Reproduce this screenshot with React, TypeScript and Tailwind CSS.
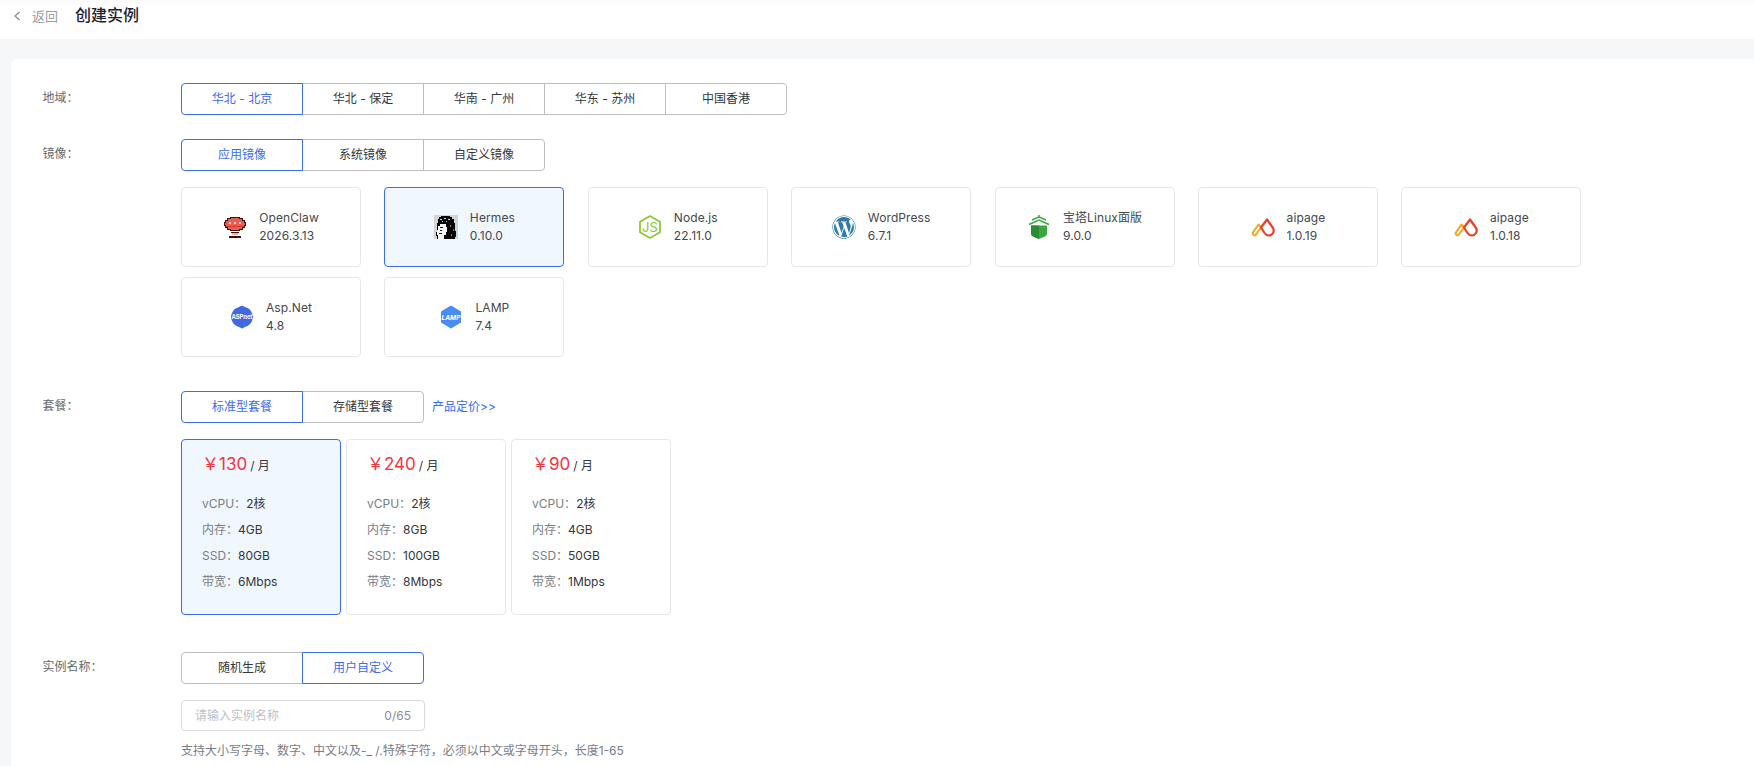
import React from "react";
import { FaWordpress } from "react-icons/fa";

const Seg = ({ items, active }: { items: string[]; active: number }) => (
  <div className="flex">
    {items.map((t, i) => (
      <div
        key={t}
        className={[
          "h-8 w-[122px] flex items-center justify-center border text-xs shrink-0",
          i > 0 ? "-ml-px" : "",
          i === 0 ? "rounded-l" : "",
          i === items.length - 1 ? "rounded-r" : "",
          i === active ? "border-[#3b6cf0] text-[#3b6cf0] relative z-10" : "border-[#bcbec4] text-[#33363d]",
        ].join(" ")}
      >
        {t}
      </div>
    ))}
  </div>
);

const Claw = () => (
  <svg viewBox="0 0 24 24" className="w-6 h-6" shapeRendering="crispEdges">
    <path d="M7 2h10v1h3v2h2v2h1v4h-1v2h-2v2h-3v1H7v-1H4v-2H2v-2H1V7h1V5h2V3h3z" fill="#3d1210" />
    <path d="M8 3h8v1h3v2h2v2h1v2h-1v2h-2v2h-3v1H8v-1H5v-2H3v-2H2V8h1V6h2V4h3z" fill="#ee5b50" />
    <path d="M6 7h2v2H6zM11 7h2v2h-2zM16 7h2v2h-2z" fill="#ffd6d0" />
    <path d="M3 11h18v1H3z" fill="#c93a30" />
    <path d="M8 17h8v1H8z" fill="#3d1210" />
    <path d="M9 18h6v2H9z" fill="#f3b0a8" />
    <path d="M6 21h12v2H6z" fill="#3d1210" />
  </svg>
);

const Hermes = () => (
  <svg viewBox="0 0 24 24" className="w-6 h-6" shapeRendering="crispEdges">
    <rect width="24" height="24" fill="#d4d4d4" />
    <path d="M7 1h9v1h2v2h2v4h1v8h1v6h-1v2H3v-3H2v-4h1V8h1V4h1V2h2z" fill="#070707" />
    <path d="M4 11h2V9h6v3h1v5h-1v3h-2v4H4v-4H3v-5h1z" fill="#f6f6f6" />
    <path d="M6 12h3v1H6zM6 15h2v1H6zM5 18h3v1H5z" fill="#1a1a1a" />
    <path d="M6 4h2v1H6zM10 3h2v1h-2zM14 4h2v1h-2zM8 6h1v1H8zM12 6h1v1h-1z" fill="#d8d8d8" />
    <path d="M16 10h1v2h-1zM19 14h1v2h-1zM17 19h1v2h-1z" fill="#777" />
  </svg>
);

const Node = () => (
  <svg viewBox="0 0 24 24" className="w-6 h-6">
    <path d="M12 1l10 5.700v10.600L12 23 2 17.300V6.700z" fill="none" stroke="#84cc2b" strokeWidth="1.700" strokeLinejoin="round" />
    <text x="12" y="17" textAnchor="middle" fontSize="13" fill="#84cc2b" fontFamily="Inter, sans-serif">JS</text>
  </svg>
);

const Baota = () => (
  <svg viewBox="0 0 24 24" className="w-6 h-6">
    <path d="M4 10.500h16v8q0 2-2 3l-6 2.500-6-2.500q-2-1-2-3z" fill="#3aa741" />
    <path d="M12 10.500H4v8q0 2 2 3l6 2.500z" fill="#2b8a34" />
    <path d="M12 0v2" stroke="#3aa741" strokeWidth="1.400" />
    <path d="M5 5l7-3 7 3" stroke="#3aa741" strokeWidth="1.500" fill="none" />
    <path d="M2 9.500l10-4.500 10 4.500" stroke="#3aa741" strokeWidth="1.500" fill="none" />
  </svg>
);

const Aipage = () => (
  <svg viewBox="0 0 24 24" className="w-6 h-6">
    <path d="M1.500 18l6-8.500 2.500 3-5.500 7.500q-2 1.500-3 -2z" fill="none" stroke="#f5a623" strokeWidth="2.100" strokeLinejoin="round" />
    <path d="M16 4.500l6 8.500c2 4-1 7.500-4 7.500-2 0-3.500-1-4.500-2.500L10 12.500z" fill="none" stroke="#ea3f26" strokeWidth="2.200" strokeLinejoin="round" />
  </svg>
);

const AspNet = () => (
  <svg viewBox="0 0 24 24" className="w-6 h-6">
    <path d="M12 0.500l3.500 1.800c4 .8 7 4.700 7.500 9.700-.5 5-3.500 8.900-7.500 9.700l-3.500 1.800-3.500-1.800c-4-.8-7-4.700-7.500-9.700.5-5 3.500-8.900 7.500-9.700z" fill="#4169e1" />
    <text x="12" y="14" textAnchor="middle" fontSize="5.800" fontWeight="700" fill="#fff" fontFamily="Inter, sans-serif">ASPnet</text>
  </svg>
);

const Lamp = () => (
  <svg viewBox="0 0 24 24" className="w-6 h-6">
    <path d="M12 0.500l10 6v11l-10 6-10-6v-11z" fill="#4a8cf7" />
    <text x="12" y="14.500" textAnchor="middle" fontSize="6.500" fontWeight="700" fontStyle="italic" fill="#fff" fontFamily="Inter, sans-serif">LAMP</text>
  </svg>
);

const images = [
  { n: "OpenClaw", v: "2026.3.13", i: <Claw /> },
  { n: "Hermes", v: "0.10.0", i: <Hermes />, on: true },
  { n: "Node.js", v: "22.11.0", i: <Node /> },
  { n: "WordPress", v: "6.7.1", i: <FaWordpress className="w-6 h-6 text-[#2f7ba3]" /> },
  { n: "宝塔Linux面版", v: "9.0.0", i: <Baota /> },
  { n: "aipage", v: "1.0.19", i: <Aipage /> },
  { n: "aipage", v: "1.0.18", i: <Aipage /> },
  { n: "Asp.Net", v: "4.8", i: <AspNet /> },
  { n: "LAMP", v: "7.4", i: <Lamp /> },
];

const plans = [
  { p: "130", a: ["2核", "4GB", "80GB", "6Mbps"], on: true },
  { p: "240", a: ["2核", "8GB", "100GB", "8Mbps"] },
  { p: "90", a: ["2核", "4GB", "50GB", "1Mbps"] },
];
const specs = ["vCPU", "内存", "SSD", "带宽"];

const Label = ({ children }: { children: React.ReactNode }) => (
  <div className="w-[138.500px] shrink-0 text-xs leading-[30px] text-[#666a72]">{children}</div>
);

export default function App() {
  return (
    <div className="h-[766px] overflow-hidden bg-[#f6f7f9] text-xs font-['Inter','Noto_Sans_CJK_SC',sans-serif]">
      <div className="h-[39px] bg-gradient-to-b from-[#fafafa] to-white to-[6px] flex items-start pt-[5px] pl-[13px]">
        <svg viewBox="0 0 8 10" className="w-2 h-[10px] mt-[6px]">
          <path d="M6.500 1L2 5l4.500 4" fill="none" stroke="#7d8088" strokeWidth="1.100" />
        </svg>
        <span className="ml-[11px] text-[13px] leading-[22px] text-[#9a9da3]">返回</span>
        <span className="ml-[17px] text-base font-medium leading-[20px] text-[#1d2130]">创建实例</span>
      </div>
      <div className="mt-5 ml-[11px] h-[707px] rounded-tl-md bg-white pl-[31.500px] pt-6">
        <div className="flex">
          <Label>地域：</Label>
          <Seg items={["华北 - 北京", "华北 - 保定", "华南 - 广州", "华东 - 苏州", "中国香港"]} active={0} />
        </div>
        <div className="flex mt-6">
          <Label>镜像：</Label>
          <div>
            <Seg items={["应用镜像", "系统镜像", "自定义镜像"]} active={0} />
            <div className="mt-4 w-[1440px] flex flex-wrap gap-y-[10px]">
              {images.map((m, i) => (
                <div
                  key={i}
                  className={
                    "w-[180px] h-20 mr-[23.400px] rounded border flex items-center justify-center gap-[12px] " +
                    (m.on ? "border-[#3b6cf0] bg-[#f0f7ff]" : "border-[#e6e7ea] bg-white")
                  }
                >
                  {m.i}
                  <div className="leading-[18px] text-[#44474e] whitespace-nowrap tracking-[0.1px]">
                    <div>{m.n}</div>
                    <div>{m.v}</div>
                  </div>
                </div>
              ))}
            </div>
          </div>
        </div>
        <div className="flex mt-[34px]">
          <Label>套餐：</Label>
          <div>
            <div className="flex items-center">
              <Seg items={["标准型套餐", "存储型套餐"]} active={0} />
              <a className="ml-2 text-[#3b6cf0]">产品定价&gt;&gt;</a>
            </div>
            <div className="mt-4 flex gap-[5px]">
              {plans.map((p) => (
                <div
                  key={p.p}
                  className={
                    "w-[160px] h-[176px] rounded border pl-[20px] pt-[12px] " +
                    (p.on ? "border-[#3b6cf0] bg-[#f0f7ff]" : "border-[#e6e7ea] bg-white")
                  }
                >
                  <div className="flex items-baseline h-6 leading-6">
                    <span className="text-[17px] text-[#f5333f]">￥{p.p}</span>
                    <span className="ml-[3px] text-[#33363d]">/ 月</span>
                  </div>
                  <div className="mt-[14.500px]">
                    {specs.map((s, i) => (
                      <div key={s} className="leading-[26px] whitespace-nowrap">
                        <span className="text-[#7a7d85]">{s}：</span>
                        <span className="text-[#33363d]">{p.a[i]}</span>
                      </div>
                    ))}
                  </div>
                </div>
              ))}
            </div>
          </div>
        </div>
        <div className="flex mt-[37px]">
          <Label>实例名称：</Label>
          <div>
            <Seg items={["随机生成", "用户自定义"]} active={1} />
            <div className="mt-4 w-[244px] h-[31px] rounded border border-[#d9dadd] flex items-center justify-between px-[13px]">
              <span className="text-[#bdbfc4]">请输入实例名称</span>
              <span className="text-[#8a8d93]">0/65</span>
            </div>
            <div className="mt-[11px] leading-[18px] text-[#7a7d85] whitespace-nowrap">
              支持大小写字母、数字、中文以及-_ /.特殊字符，必须以中文或字母开头，长度1-65
            </div>
          </div>
        </div>
      </div>
    </div>
  );
}
